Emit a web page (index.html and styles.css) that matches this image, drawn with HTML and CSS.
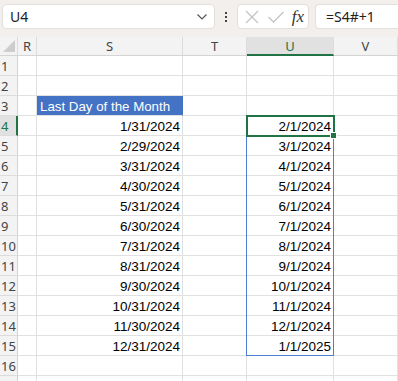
FILE: index.html
```html
<!DOCTYPE html>
<html lang="en">
<head>
  <meta charset="UTF-8" />
  <title>Sheet</title>
  <link rel="stylesheet" href="styles.css">
</head>
<body>

  <div class="toolbar">
    <div class="namebox">
      <span>U4</span>
      <svg class="chev" width="12" height="8" viewBox="0 0 12 8"><path d="M1.5 1.5 L6 6 L10.5 1.5" fill="none" stroke="#555" stroke-width="1.2"/></svg>
    </div>
    <div class="dots"><i></i><i></i><i></i></div>
    <div class="fxbox">
      <svg width="16" height="16" viewBox="0 0 16 16"><path d="M2 2 L14 14 M14 2 L2 14" stroke="#c4c4c4" stroke-width="1.3"/></svg>
      <svg width="18" height="16" viewBox="0 0 18 16"><path d="M1.5 8 L6.5 13 L16.5 3" fill="none" stroke="#c4c4c4" stroke-width="1.3"/></svg>
      <span class="fx">fx</span>
    </div>
    <div class="formula">=S4#+1</div>
  </div>

  <div class="sheet">
    <div class="grid">
      <div class="hd corner"><b></b></div>
      <div class="hd">R</div>
      <div class="hd">S</div>
      <div class="hd">T</div>
      <div class="hd sel">U</div>
      <div class="hd">V</div>

      <div class="rn">1</div><div class="c"></div><div class="c"></div><div class="c"></div><div class="c"></div><div class="c"></div>
      <div class="rn">2</div><div class="c"></div><div class="c"></div><div class="c"></div><div class="c"></div><div class="c"></div>
      <div class="rn">3</div><div class="c"></div><div class="c title">Last Day of the Month</div><div class="c"></div><div class="c"></div><div class="c"></div>
      <div class="rn sel">4</div><div class="c"></div><div class="c num">1/31/2024</div><div class="c"></div><div class="c num">2/1/2024</div><div class="c"></div>
      <div class="rn">5</div><div class="c"></div><div class="c num">2/29/2024</div><div class="c"></div><div class="c num">3/1/2024</div><div class="c"></div>
      <div class="rn">6</div><div class="c"></div><div class="c num">3/31/2024</div><div class="c"></div><div class="c num">4/1/2024</div><div class="c"></div>
      <div class="rn">7</div><div class="c"></div><div class="c num">4/30/2024</div><div class="c"></div><div class="c num">5/1/2024</div><div class="c"></div>
      <div class="rn">8</div><div class="c"></div><div class="c num">5/31/2024</div><div class="c"></div><div class="c num">6/1/2024</div><div class="c"></div>
      <div class="rn">9</div><div class="c"></div><div class="c num">6/30/2024</div><div class="c"></div><div class="c num">7/1/2024</div><div class="c"></div>
      <div class="rn">10</div><div class="c"></div><div class="c num">7/31/2024</div><div class="c"></div><div class="c num">8/1/2024</div><div class="c"></div>
      <div class="rn">11</div><div class="c"></div><div class="c num">8/31/2024</div><div class="c"></div><div class="c num">9/1/2024</div><div class="c"></div>
      <div class="rn">12</div><div class="c"></div><div class="c num">9/30/2024</div><div class="c"></div><div class="c num">10/1/2024</div><div class="c"></div>
      <div class="rn">13</div><div class="c"></div><div class="c num">10/31/2024</div><div class="c"></div><div class="c num">11/1/2024</div><div class="c"></div>
      <div class="rn">14</div><div class="c"></div><div class="c num">11/30/2024</div><div class="c"></div><div class="c num">12/1/2024</div><div class="c"></div>
      <div class="rn">15</div><div class="c"></div><div class="c num">12/31/2024</div><div class="c"></div><div class="c num">1/1/2025</div><div class="c"></div>
      <div class="rn">16</div><div class="c"></div><div class="c"></div><div class="c"></div><div class="c"></div><div class="c"></div>
      <div class="rn"></div><div class="c"></div><div class="c"></div><div class="c"></div><div class="c"></div><div class="c"></div>
    </div>

    <!-- selection overlays -->
    <div class="spill"></div>
    <div class="active"><span class="handle"></span></div>
  </div>

</body>
</html>
```

FILE: styles.css
```css
body {
  margin: 0;
  width: 398px;
  height: 381px;
  overflow: hidden;
  background: #fff;
  font-family: "Liberation Sans", Arial, sans-serif;
}

.toolbar {
  height: 37px;
  box-sizing: border-box;
  background: #f3efec;
  display: flex;
  align-items: flex-start;
  padding: 4px 0 0 2px;
}

.namebox,
.fxbox,
.formula {
  height: 25px;
  box-sizing: border-box;
  background: #fff;
  border: 1px solid #e3dfdb;
  border-radius: 4px;
  display: flex;
  align-items: center;
}

.namebox {
  width: 213px;
  padding: 0 6px 0 7px;
  justify-content: space-between;
  font-family: "Noto Sans", sans-serif;
  font-size: 14px;
  color: #222;
}

.dots {
  width: 22px;
  height: 25px;
  display: flex;
  flex-direction: column;
  align-items: center;
  justify-content: center;
  gap: 2px;
}

.dots i {
  width: 2px;
  height: 2px;
  background: #444;
}

.fxbox {
  width: 72px;
  padding: 0 4px 0 6px;
  justify-content: space-between;
}

.fx {
  font-family: "Liberation Serif", serif;
  font-style: italic;
  font-size: 17px;
  color: #333;
}

.formula {
  margin-left: 6px;
  flex: 1;
  padding-left: 10px;
  border-right: none;
  border-radius: 4px 0 0 4px;
  font-family: "Noto Sans", sans-serif;
  font-size: 14px;
  color: #222;
}

.sheet {
  position: relative;
}

.grid {
  display: grid;
  grid-template-columns: 18px 19px 146px 64px 87px 1fr;
  grid-template-rows: 19px;
  grid-auto-rows: 20px;
}

.hd {
  background: #f3f3f3;
  border-right: 1px solid #dcdcdc;
  border-bottom: 1px solid #d4d4d4;
  box-sizing: border-box;
  text-align: center;
  font-family: "Noto Sans", sans-serif;
  font-size: 13px;
  line-height: 18px;
  color: #444;
}

.hd.sel {
  background: #e1e1e1;
  color: #217346;
  border-bottom: 2px solid #217346;
}

.corner {
  position: relative;
}

.corner b {
  position: absolute;
  left: 3px;
  bottom: 3px;
  width: 0;
  height: 0;
  border-left: 12px solid transparent;
  border-bottom: 12px solid #cdcdcd;
}

.rn {
  background: #f3f3f3;
  border-right: 1px solid #d4d4d4;
  border-bottom: 1px solid #dcdcdc;
  box-sizing: border-box;
  font-family: "Noto Sans", sans-serif;
  font-size: 13px;
  line-height: 21px;
  padding-left: 1px;
  color: #444;
  overflow: hidden;
  white-space: nowrap;
}

.rn.sel {
  background: #e1e1e1;
  color: #217346;
  border-right: 2px solid #217346;
}

.c {
  border-right: 1px solid #e1e1e1;
  border-bottom: 1px solid #e1e1e1;
  box-sizing: border-box;
  font-size: 13.5px;
  line-height: 22px;
  color: #000;
  white-space: nowrap;
  overflow: hidden;
}

.num {
  text-align: right;
  padding-right: 2px;
}

.title {
  background: #4472c4;
  color: #fff;
  padding-left: 3px;
  font-size: 13.3px;
  border-right-color: #4472c4;
}

.spill {
  position: absolute;
  left: 246px;
  top: 98px;
  width: 88px;
  height: 221px;
  box-sizing: border-box;
  border: 1px solid #4a7fd4;
}

.active {
  position: absolute;
  left: 246px;
  top: 78px;
  width: 89px;
  height: 22px;
  box-sizing: border-box;
  border: 2px solid #217346;
}

.handle {
  position: absolute;
  right: -4px;
  bottom: -4px;
  width: 5px;
  height: 5px;
  background: #217346;
  border: 1px solid #fff;
}
```
